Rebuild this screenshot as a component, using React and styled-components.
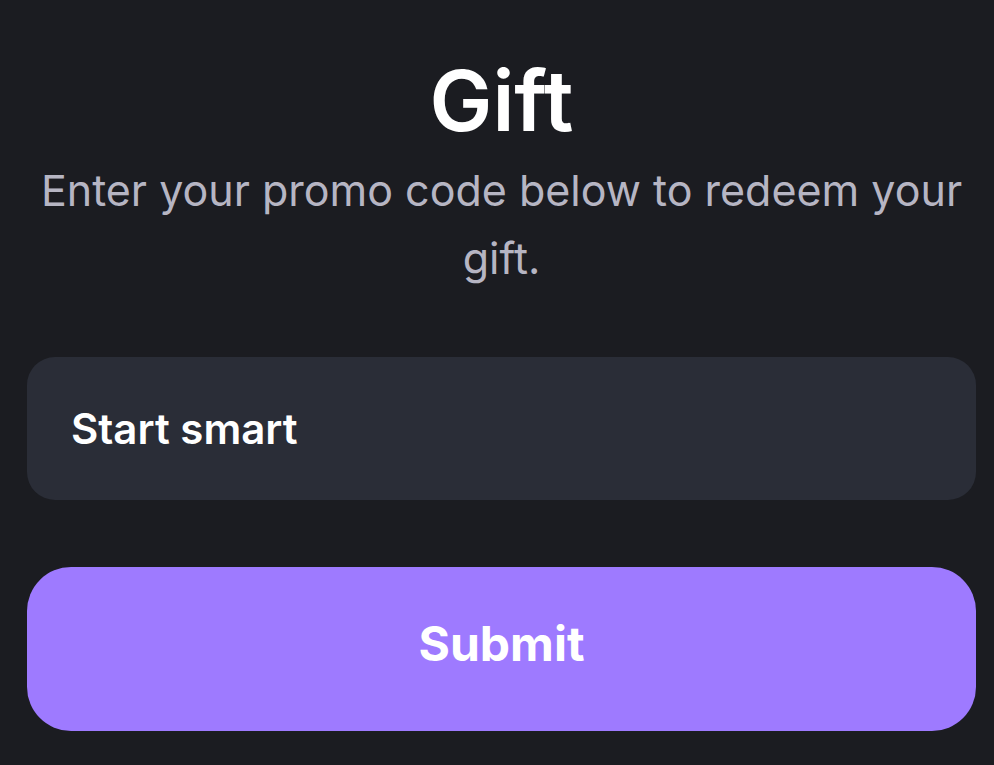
import { createGlobalStyle, styled } from "styled-components";

const GlobalStyle = createGlobalStyle`
  html, body {
    margin: 0;
    padding: 0;
    background: #1b1c21;
  }
  body {
    font-family: Inter, "Noto Sans", sans-serif;
  }
`;

const Page = styled.div`
  min-height: 765px;
  padding: 53px 18px 0 27px;
  box-sizing: border-box;
  display: flex;
  flex-direction: column;
  background: #1b1c21;
`;

const Title = styled.h1`
  margin: 0 0 7px;
  text-align: center;
  color: #ffffff;
  font-size: 84px;
  font-weight: 600;
  line-height: 96px;
`;

const Subtitle = styled.p`
  margin: 0;
  padding: 0 4px;
  text-align: center;
  color: #b6b5c3;
  font-size: 43px;
  font-weight: 400;
  line-height: 68px;
`;

const CodeInput = styled.input`
  margin-top: 65px;
  height: 143px;
  padding: 0 44px;
  box-sizing: border-box;
  border: none;
  border-radius: 28px;
  background: #2a2d37;
  color: #ffffff;
  font-family: inherit;
  font-size: 42px;
  font-weight: 600;
  outline: none;
`;

const SubmitButton = styled.button`
  margin-top: 67px;
  height: 164px;
  padding: 0 0 12px;
  border: none;
  border-radius: 44px;
  background: #9e7aff;
  color: #ffffff;
  font-family: inherit;
  font-size: 48px;
  font-weight: 700;
  cursor: pointer;
`;

const App = () => {
  return (
    <>
      <GlobalStyle />
      <Page>
        <Title>Gift</Title>
        <Subtitle>Enter your promo code below to redeem your gift.</Subtitle>
        <CodeInput defaultValue="Start smart" />
        <SubmitButton>Submit</SubmitButton>
      </Page>
    </>
  );
};

export default App;
